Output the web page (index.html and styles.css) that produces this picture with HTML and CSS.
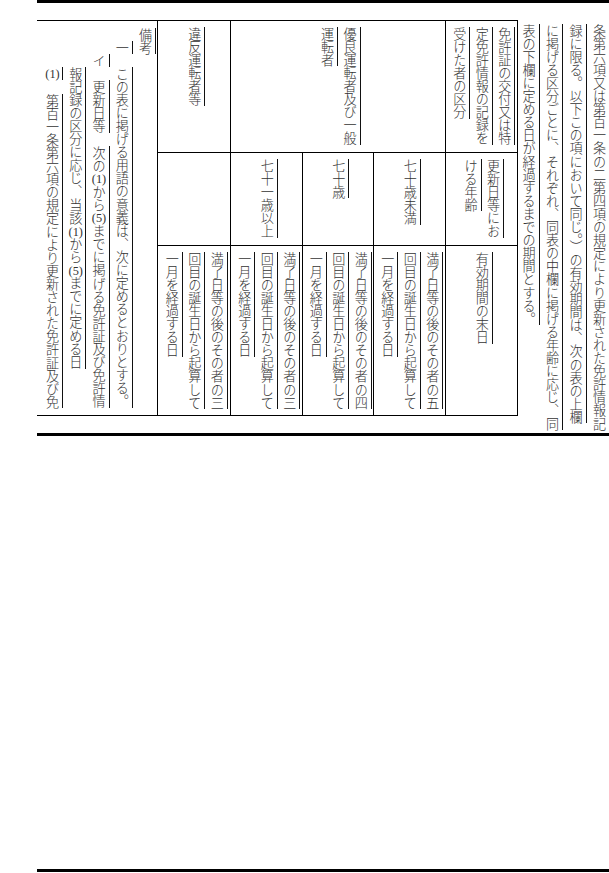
FILE: index.html
```html
<!DOCTYPE html>
<html lang="ja">
<head>
<meta charset="utf-8">
<title>有効期間</title>
<link rel="stylesheet" href="styles.css">
</head>
<body>
<div class="page">
  <div class="rule"></div>
  <div class="section">
    <div class="box">
      <div class="notes">
        <p class="n-title"><span class="u">備考</span></p>
        <p class="n-item1"><span class="u">一</span>　<span class="u">この表に掲げる用語の意義は、次に定めるとおりとする。</span></p>
        <p class="n-item2"><span class="u">イ</span>　<span class="u">更新日等</span>　<span class="u">次の<span class="tcy">(1)</span>から<span class="tcy">(5)</span>までに掲げる免許証及び免許情<br>報記録の区分に応じ、当該<span class="tcy">(1)</span>から<span class="tcy">(5)</span>までに定める日</span></p>
        <p class="n-item3"><span class="u"><span class="tcy">(1)</span></span>　<span class="u">第百一条第六項の規定により更新された免許証及び免</span></p>
      </div>
      <div class="grid">
        <div class="cell"><div class="v"><span class="u">免許証の交付又は特<br>定免許情報の記録を<br>受けた者の区分</span></div></div>
        <div class="cell span3"><div class="v"><span class="u">優良運転者及び一般<br>運転者</span></div></div>
        <div class="cell"><div class="v"><span class="u">違反運転者等</span></div></div>

        <div class="cell"><div class="v"><span class="u">更新日等にお<br>ける年齢</span></div></div>
        <div class="cell"><div class="v"><span class="u">七十歳未満</span></div></div>
        <div class="cell"><div class="v"><span class="u">七十歳</span></div></div>
        <div class="cell"><div class="v"><span class="u">七十一歳以上</span></div></div>
        <div class="cell"></div>

        <div class="cell"><div class="v"><span class="u">有効期間の末日</span></div></div>
        <div class="cell"><div class="v"><span class="u">満了日等の後のその者の五<br>回目の誕生日から起算して<br>一月を経過する日</span></div></div>
        <div class="cell"><div class="v"><span class="u">満了日等の後のその者の四<br>回目の誕生日から起算して<br>一月を経過する日</span></div></div>
        <div class="cell"><div class="v"><span class="u">満了日等の後のその者の三<br>回目の誕生日から起算して<br>一月を経過する日</span></div></div>
        <div class="cell"><div class="v"><span class="u">満了日等の後のその者の三<br>回目の誕生日から起算して<br>一月を経過する日</span></div></div>
      </div>
    </div>
    <div class="para"><span class="u">条第六項又は第百一条の二第四項の規定により更新された免許情報記<br>録に限る。以下この項において同じ。）の有効期間は、次の表の上欄<br>に掲げる区分ごとに、それぞれ、同表の中欄に掲げる年齢に応じ、同<br>表の下欄に定める日が経過するまでの期間とする。</span></div>
  </div>
  <div class="rule rule-mid"></div>
  <div class="rule rule-foot"></div>
</div>
</body>
</html>
```
FILE: styles.css
```css
html, body {
  margin: 0;
  padding: 0;
  background: #fff;
}

body {
  font-family: "Noto Sans CJK JP", "Noto Sans CJK SC", sans-serif;
  font-size: 13.1px;
  font-weight: 300;
  color: #333;
}

.page {
  width: 609px;
  height: 873px;
  padding-left: 37px;
  box-sizing: border-box;
  overflow: hidden;
}

.rule {
  height: 3px;
  background: #000;
  width: 574px;
}

.section {
  display: flex;
  align-items: flex-start;
  margin-top: 17px;
  height: 413px;
}

.box {
  flex: none;
  display: flex;
  border-top: 1px solid #000;
  border-bottom: 1px solid #000;
  border-right: 1px solid #000;
}

/* notes (備考) */
.notes {
  flex: none;
  writing-mode: vertical-rl;
  width: 120px;
  height: 387px;
  padding-top: 7px;
  border-right: 1px solid #000;
  line-height: 23.25px;
  white-space: nowrap;
}

.notes p {
  margin: 0;
}

.n-item1 {
  padding-inline-start: 2em;
  text-indent: -1em;
}

.n-item2 {
  padding-inline-start: 3em;
  text-indent: -1em;
}

.n-item3 {
  padding-inline-start: 4em;
  text-indent: -1em;
}

.tcy {
  text-combine-upright: all;
  font-family: "Liberation Serif", serif;
  font-weight: 400;
}

/* table */
.grid {
  flex: none;
  direction: rtl;
  display: grid;
  grid-template-columns: 71px 71px 70px 71px 72px;
  grid-template-rows: 131px 92px 169px;
  gap: 1px;
  background: #000;
}

.cell {
  direction: ltr;
  background: #fff;
  display: flex;
  justify-content: center;
  align-items: flex-start;
  padding-top: 6px;
}

.span3 {
  grid-column: span 3;
}

.v {
  writing-mode: vertical-rl;
  line-height: 22.5px;
  white-space: nowrap;
}

/* paragraph to the right */
.para {
  flex: none;
  writing-mode: vertical-rl;
  width: 93px;
  height: 410px;
  padding-top: 3.5px;
  line-height: 23.5px;
  white-space: nowrap;
}

/* side rule next to each line of text */
.u {
  border-right: 1px solid #111;
}

.rule-mid {
  margin-top: 0;
}

.rule-foot {
  margin-top: 433px;
}
```
